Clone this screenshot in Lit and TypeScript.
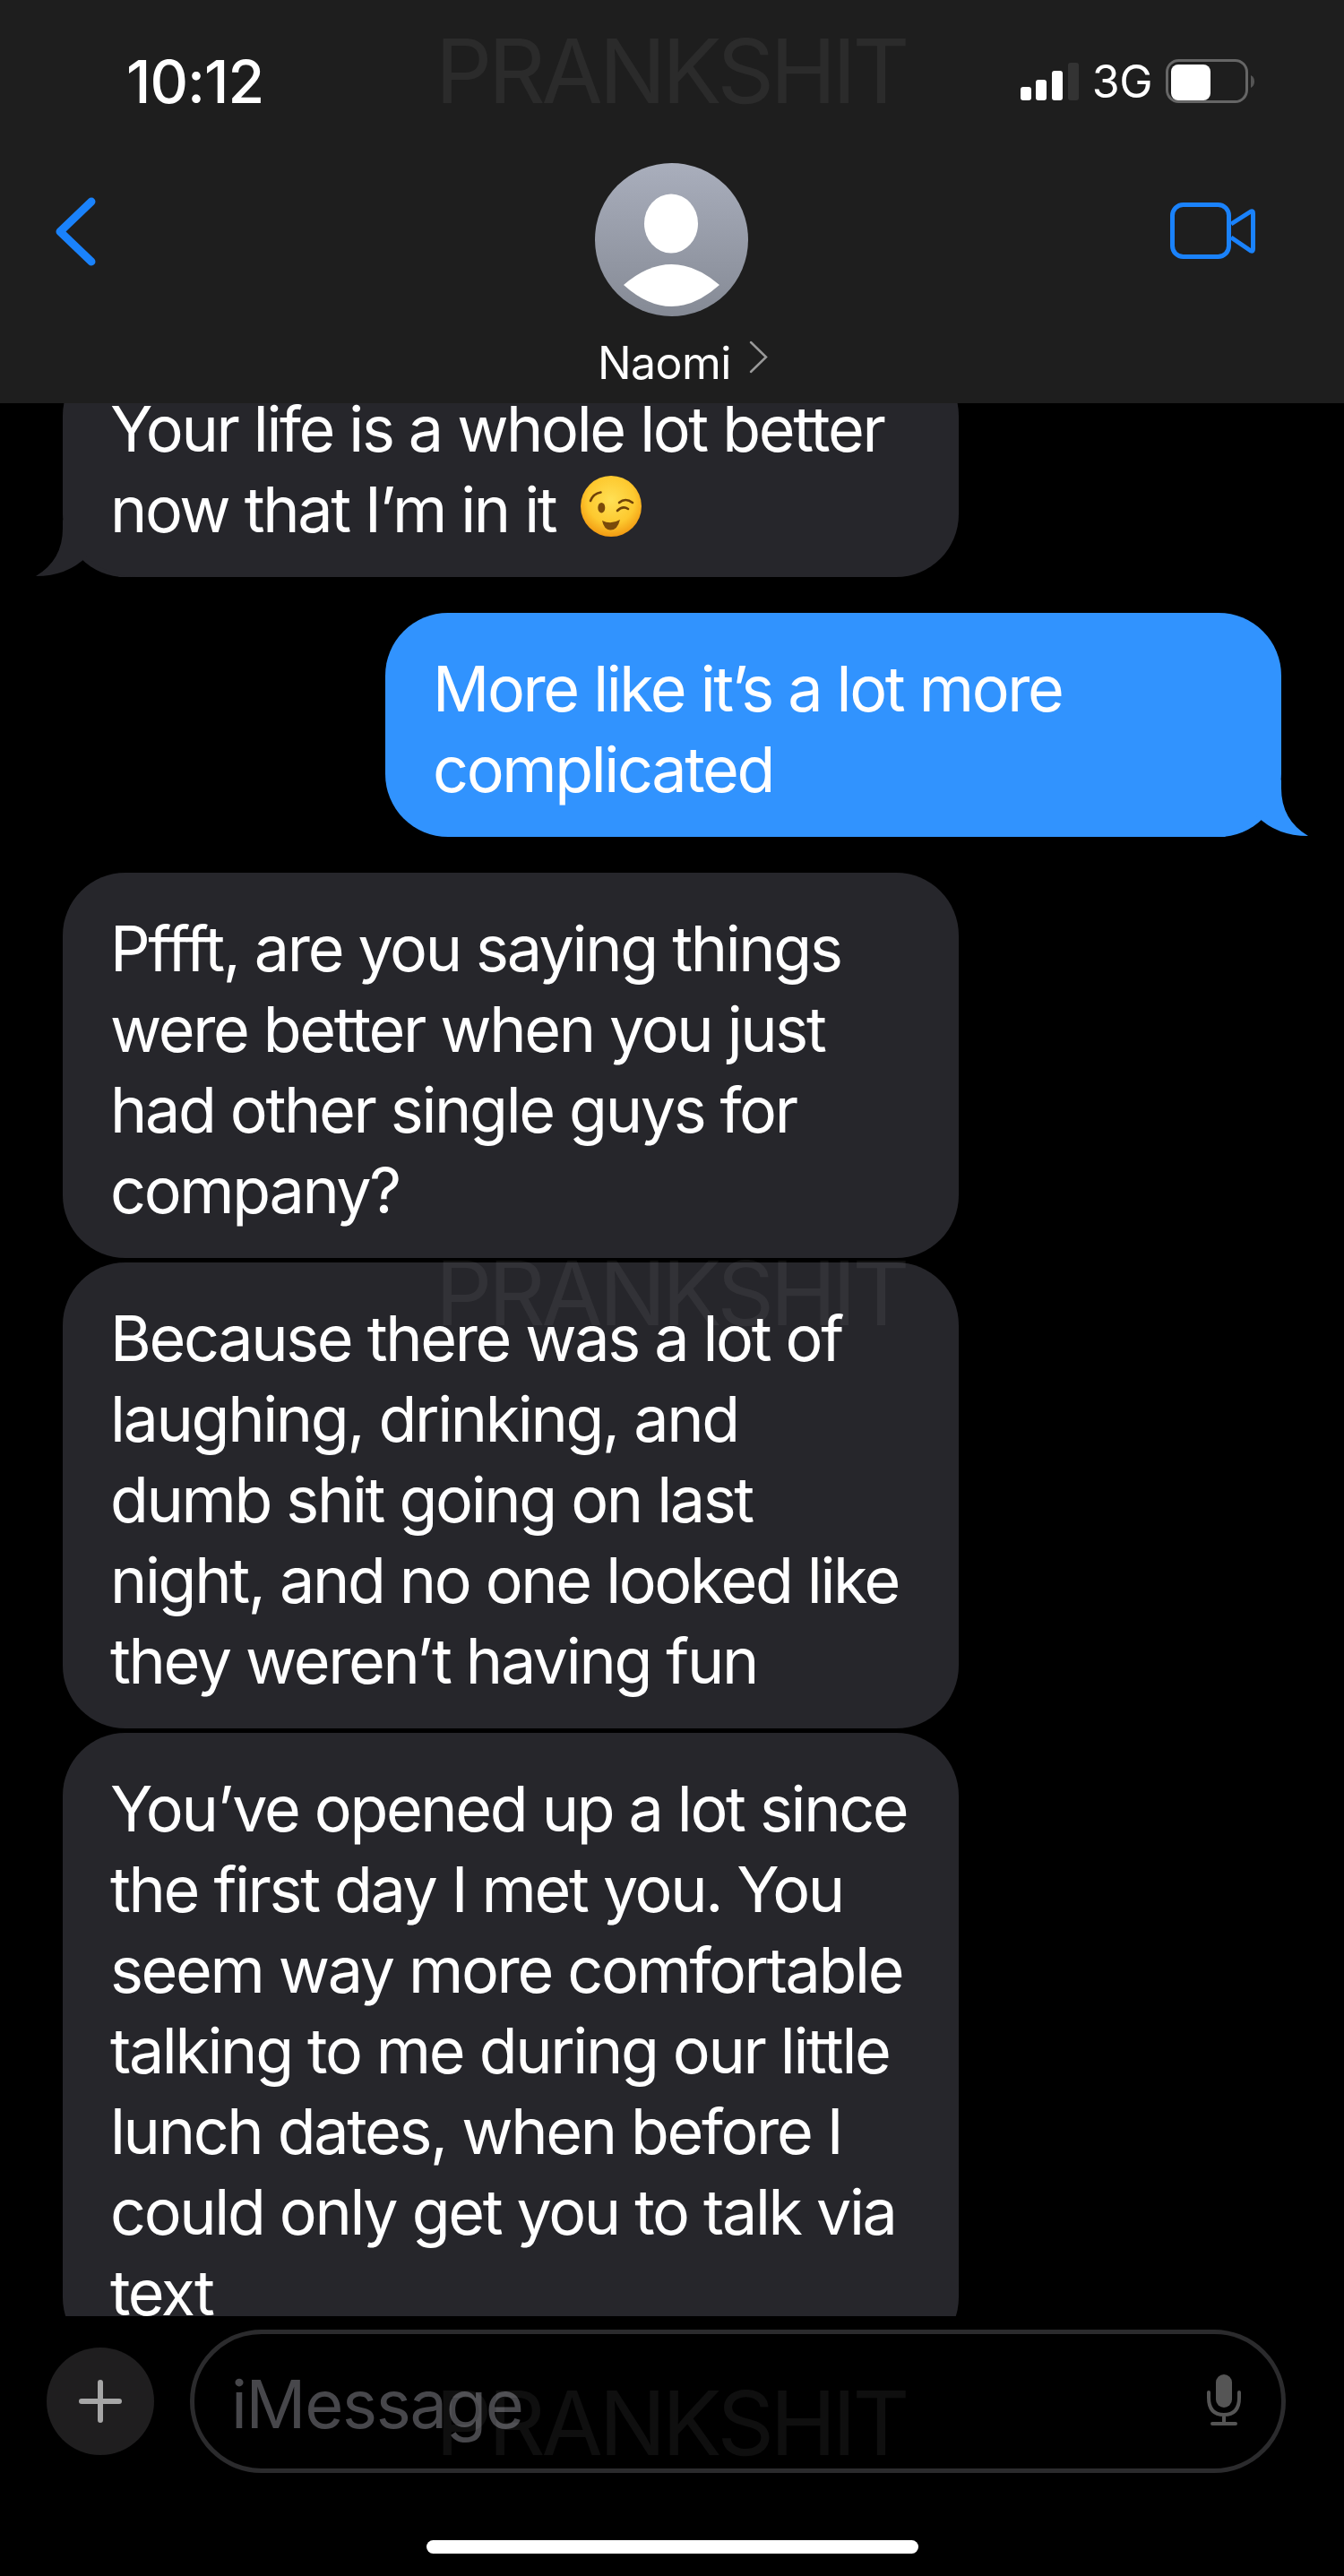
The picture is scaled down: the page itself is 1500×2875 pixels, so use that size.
import { LitElement, css, html } from 'lit'
import { customElement } from 'lit/decorators.js'

const tail = html`
  <svg class="tail" width="113" height="64" viewBox="0 0 113 64">
    <path d="M0 64Q32 64 56 41Q78 63 113 63Q83 45 83 10L83 0L20 64Z" fill="currentColor" />
  </svg>
`

const wink = html`
  <svg class="emoji" width="68" height="68" viewBox="0 0 68 68">
    <defs>
      <radialGradient id="face" cx="50%" cy="40%" r="60%">
        <stop offset="0" stop-color="#ffe055" />
        <stop offset="0.65" stop-color="#fdc92f" />
        <stop offset="1" stop-color="#f29a12" />
      </radialGradient>
    </defs>
    <circle cx="34" cy="34" r="34" fill="url(#face)" />
    <path d="M11 28Q14 20 22.5 18.5" fill="none" stroke="#6f4208" stroke-width="2.6" stroke-linecap="round" />
    <ellipse cx="23.3" cy="35.7" rx="4" ry="5.8" fill="#7a4a0a" />
    <path d="M41 39Q47 33 53 37" fill="none" stroke="#6f4208" stroke-width="2.6" stroke-linecap="round" />
    <path d="M43 30Q50 24 58 30" fill="none" stroke="#6f4208" stroke-width="2.6" stroke-linecap="round" />
    <path d="M24 50Q34 55 44 49Q41 61 33 60.5Q26 60 24 50Z" fill="#7a4a0a" />
  </svg>
`

@customElement('app-root')
export class AppRoot extends LitElement {
  static styles = css`
    :host {
      display: block;
      width: 1500px;
      height: 2875px;
      background: #000;
      overflow: hidden;
      position: relative;
      font-family: Inter, "Liberation Sans", sans-serif;
      color: #fff;
    }
    .page { display: flex; flex-direction: column; height: 2875px; }

    .header { height: 450px; flex: none; background: #1e1e1e; box-sizing: border-box; }
    .status { display: flex; align-items: center; height: 182px; padding: 0 100px 0 141px; }
    .time { font-size: 66px; font-weight: 500; letter-spacing: -1px; margin-right: auto; }
    .signal { display: block; margin-right: 15px; }
    .network { font-size: 50px; letter-spacing: -0.5px; margin-right: 15px; }
    .battery { display: block; }
    .nav { display: grid; grid-template-columns: 664px 171px 1fr; height: 171px; }
    .back { display: block; margin: 38px 0 0 60px; }
    .video { display: block; margin: 44px 96px 0 0; justify-self: end; }
    .avatar { display: block; }
    .name-row { display: flex; align-items: center; height: 60px; margin-top: 22px; padding-left: 667px; font-size: 50px; letter-spacing: -0.6px; }
    .more { display: block; margin-left: 20px; margin-top: -14px; }

    .thread { height: 2135px; overflow: hidden; flex: none; padding: 0 70px; box-sizing: border-box; display: flex; flex-direction: column; }
    .bubble { position: relative; flex: none; width: 1000px; box-sizing: border-box; background: #26262b; border-radius: 70px; padding: 39.5px 30px 30.5px 53px; font-size: 70px; line-height: 90px; letter-spacing: -2.35px; }
    .first { margin-top: -56px; }
    .blue { background: #3193fe; align-self: flex-end; margin: 40px 0; }
    .next { margin-top: 5px; }
    .tail { position: absolute; bottom: 0; right: -30px; display: block; color: #3193fe; }
    .in-tail .tail { right: auto; left: -30px; transform: scaleX(-1); color: #26262b; }
    .emoji { vertical-align: -5px; margin-left: 10px; }

    .composer { display: flex; align-items: center; gap: 40px; height: 160px; margin-top: 15px; padding-left: 52px; flex: none; }
    .plus { display: flex; align-items: center; justify-content: center; width: 120px; height: 120px; border-radius: 50%; background: #1f1e1f; flex: none; }
    .field { display: flex; align-items: center; justify-content: space-between; width: 1223px; height: 160px; box-sizing: border-box; border: 5px solid #2b2b2d; border-radius: 80px; padding: 0 45px 0 41px; }
    .placeholder { font-size: 74px; letter-spacing: -1.3px; color: #47474b; padding-top: 5px; }
    .home { width: 549px; height: 15px; border-radius: 8px; background: #fff; margin: 75px auto 0; flex: none; }

    .mark { position: absolute; left: 486px; width: 522px; text-align: center; font-size: 99px; line-height: 100px; letter-spacing: -4.2px; color: rgba(255, 255, 255, 0.06); white-space: nowrap; pointer-events: none; }
  `

  render() {
    return html`
      <div class="page">
        <div class="header">
          <div class="status">
            <span class="time">10:12</span>
            <svg class="signal" width="65" height="42" viewBox="0 0 65 42">
              <rect x="0" y="27" width="12" height="15" rx="3" fill="#fff" />
              <rect x="17" y="19" width="12" height="23" rx="3" fill="#fff" />
              <rect x="35" y="9" width="12" height="33" rx="3" fill="#fff" />
              <rect x="53" y="0" width="12" height="42" rx="3" fill="#333" />
            </svg>
            <span class="network">3G</span>
            <svg class="battery" width="99" height="50" viewBox="0 0 99 50">
              <rect x="1.5" y="1.5" width="89" height="46" rx="13" fill="none" stroke="#666" stroke-width="3" />
              <rect x="6" y="6" width="44" height="40" rx="8" fill="#fff" />
              <path d="M95 18Q99 20 99 25Q99 30 95 32Z" fill="#555" />
            </svg>
          </div>
          <div class="nav">
            <svg class="back" width="50" height="77" viewBox="0 0 50 77">
              <path d="M42 5L7 38.5L42 72" fill="none" stroke="#1a82fb" stroke-width="9" stroke-linecap="round" stroke-linejoin="round" />
            </svg>
            <svg class="avatar" width="171" height="171" viewBox="0 0 171 171">
              <defs>
                <linearGradient id="av" x1="0" y1="0" x2="0" y2="1">
                  <stop offset="0" stop-color="#a9aebc" />
                  <stop offset="1" stop-color="#858a95" />
                </linearGradient>
              </defs>
              <circle cx="85.5" cy="85.5" r="85.5" fill="url(#av)" />
              <ellipse cx="85" cy="67.5" rx="30" ry="33" fill="#fff" />
              <path d="M32 136Q85.5 90 139 136Q85.5 184 32 136Z" fill="#fff" />
            </svg>
            <svg class="video" width="98" height="70" viewBox="0 0 98 70">
              <rect x="2.5" y="2.5" width="63" height="58" rx="12" fill="none" stroke="#1a82fb" stroke-width="5" />
              <path d="M68 24L90 10Q92.500 9 92.500 12L92.500 52Q92.500 55 90 54L68 39" fill="none" stroke="#1a82fb" stroke-width="5" stroke-linejoin="round" />
            </svg>
          </div>
          <div class="name-row">
            <span>Naomi</span>
            <svg class="more" width="22" height="37" viewBox="0 0 22 37">
              <path d="M2 2L19 18.500L2 35" fill="none" stroke="#999" stroke-width="2.500" stroke-linecap="round" />
            </svg>
          </div>
        </div>

        <div class="thread">
          <div class="bubble first in-tail">Your life is a whole lot better<br>now that I’m in it${wink}${tail}</div>
          <div class="bubble blue">More like it’s a lot more<br>complicated${tail}</div>
          <div class="bubble">Pffft, are you saying things<br>were better when you just<br>had other single guys for<br>company?</div>
          <div class="bubble next">Because there was a lot of<br>laughing, drinking, and<br>dumb shit going on last<br>night, and no one looked like<br>they weren’t having fun</div>
          <div class="bubble next">You’ve opened up a lot since<br>the first day I met you. You<br>seem way more comfortable<br>talking to me during our little<br>lunch dates, when before I<br>could only get you to talk via<br>text</div>
        </div>

        <div class="composer">
          <div class="plus">
            <svg width="48" height="48" viewBox="0 0 48 48">
              <path d="M24 3V45M3 24H45" fill="none" stroke="#a6a6a6" stroke-width="6" stroke-linecap="round" />
            </svg>
          </div>
          <div class="field">
            <span class="placeholder">iMessage</span>
            <svg width="38" height="60" viewBox="0 0 38 60">
              <rect x="10" y="0" width="18" height="37" rx="9" fill="#555" />
              <path d="M2 20V26Q2 45 19 45Q36 45 36 26V20M19 45V54M6 55H32" fill="none" stroke="#555" stroke-width="4" stroke-linecap="round" />
            </svg>
          </div>
        </div>
        <div class="home"></div>
      </div>

      <div class="mark" style="top: 29px">PRANKSHIT</div>
      <div class="mark" style="top: 1393px">PRANKSHIT</div>
      <div class="mark" style="top: 2654px">PRANKSHIT</div>
    `
  }
}
